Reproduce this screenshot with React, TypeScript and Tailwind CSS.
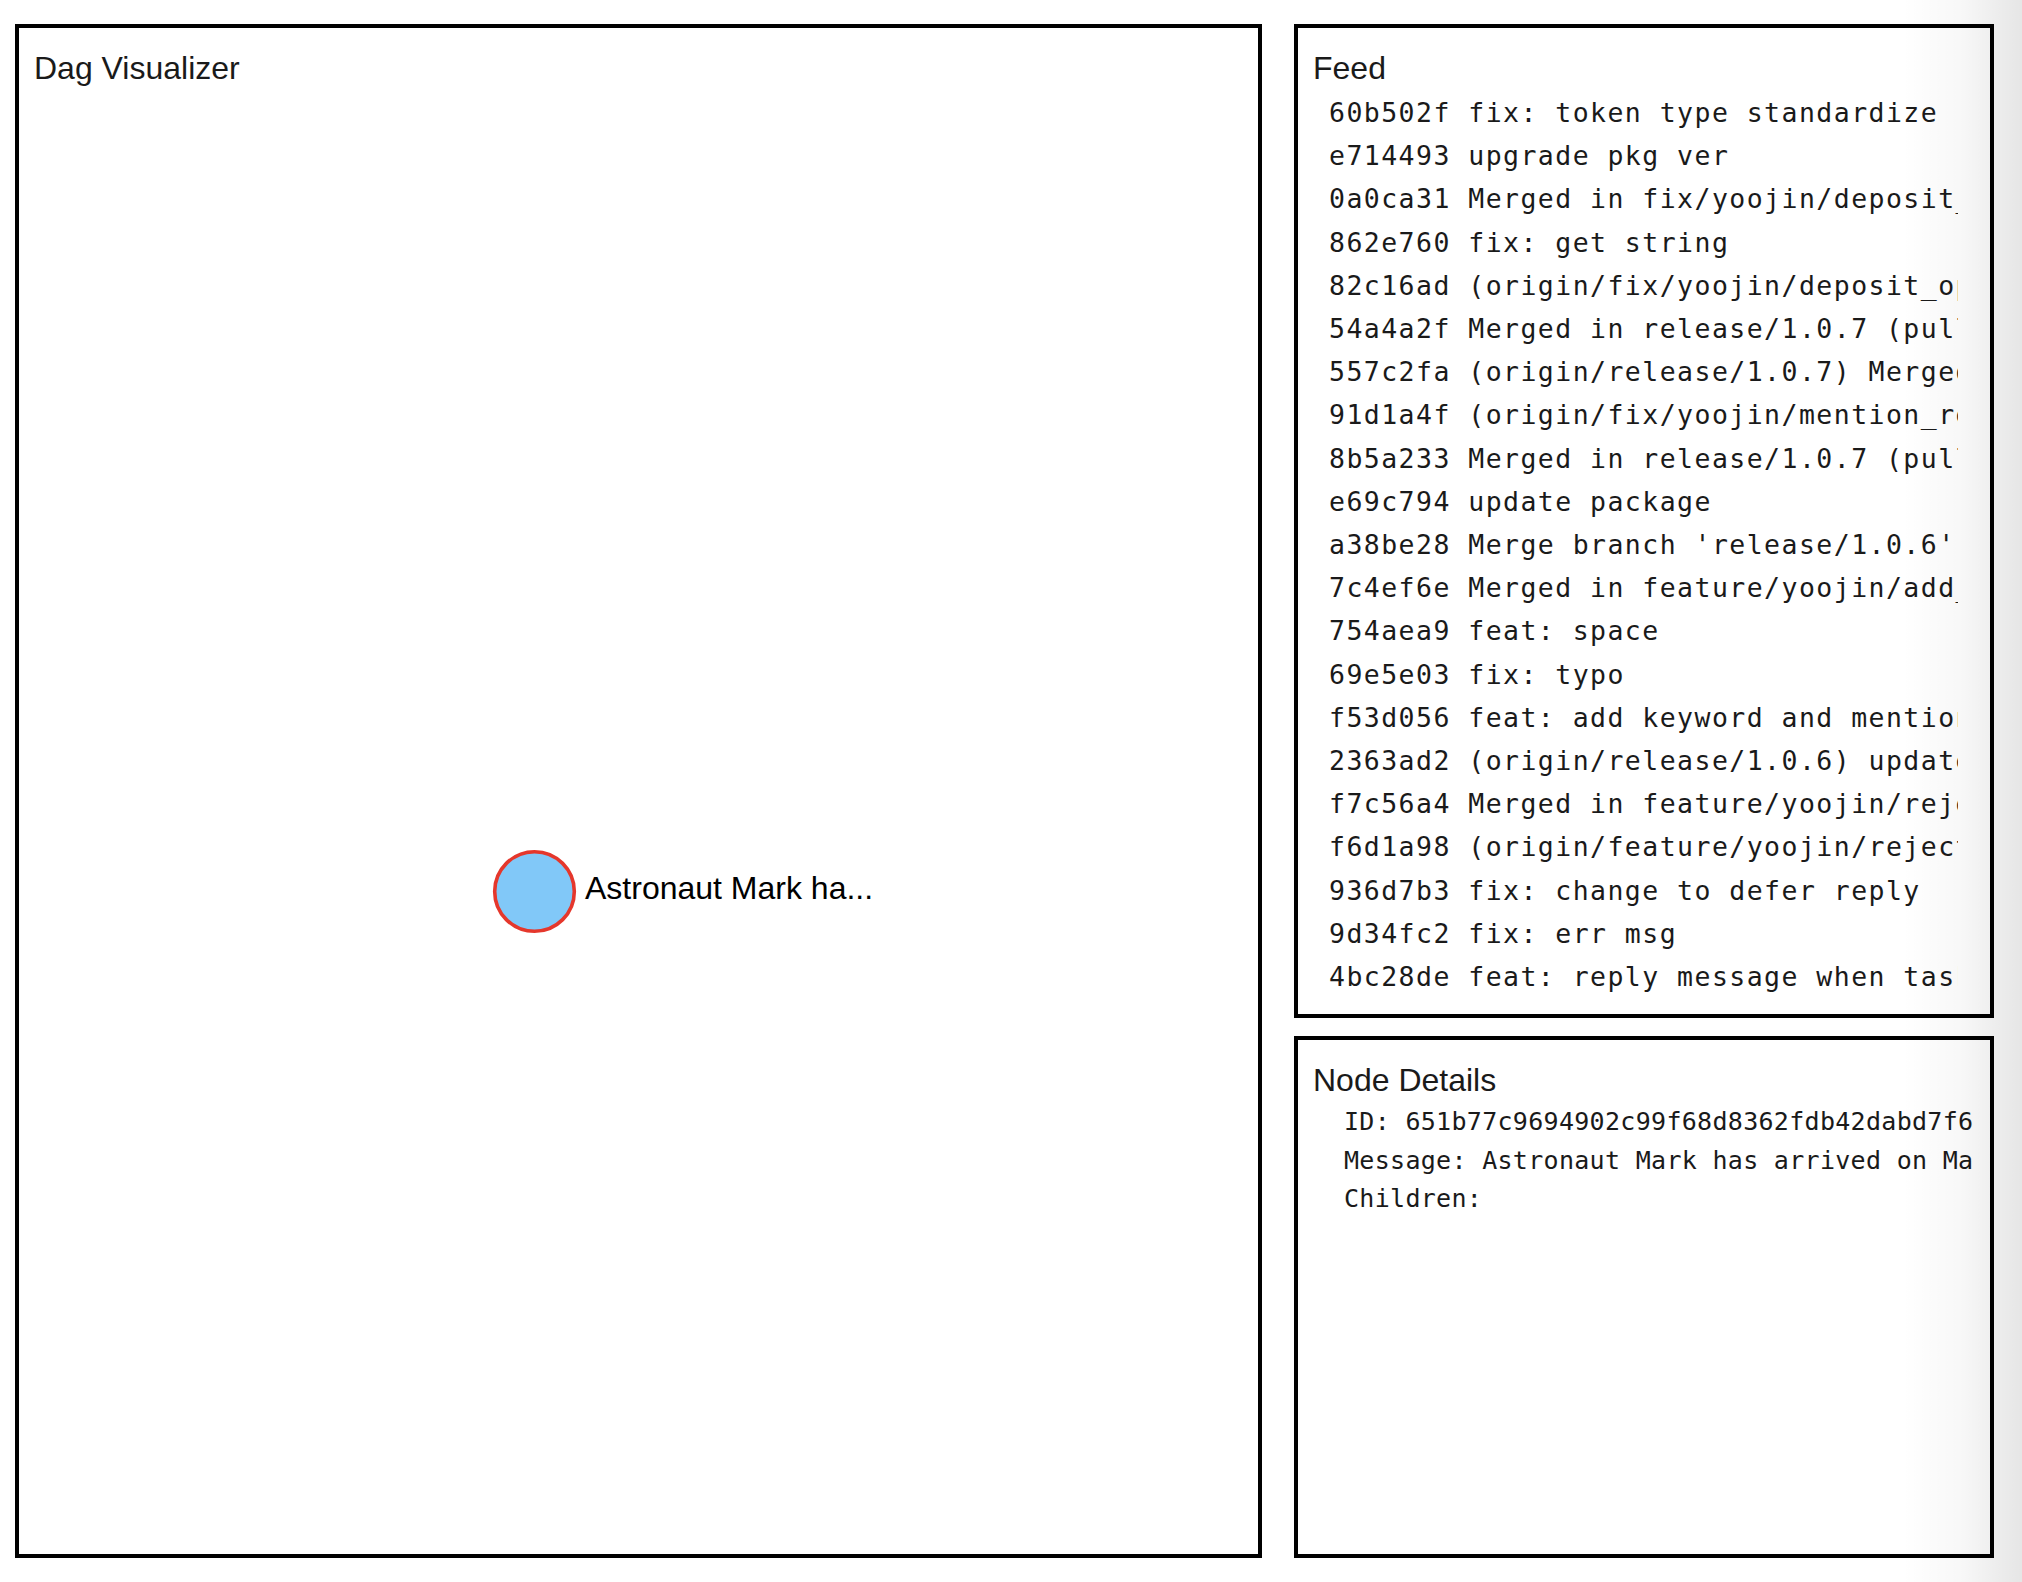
import React from "react";

const feed = [
  "60b502f fix: token type standardize",
  "e714493 upgrade pkg ver",
  "0a0ca31 Merged in fix/yoojin/deposit_option (pull request #14)",
  "862e760 fix: get string",
  "82c16ad (origin/fix/yoojin/deposit_option) fix: deposit option",
  "54a4a2f Merged in release/1.0.7 (pull request #13)",
  "557c2fa (origin/release/1.0.7) Merged in fix/yoojin/mention_reply",
  "91d1a4f (origin/fix/yoojin/mention_reply) fix: mention reply",
  "8b5a233 Merged in release/1.0.7 (pull request #12)",
  "e69c794 update package",
  "a38be28 Merge branch 'release/1.0.6' into develop",
  "7c4ef6e Merged in feature/yoojin/add_keyword (pull request #11)",
  "754aea9 feat: space",
  "69e5e03 fix: typo",
  "f53d056 feat: add keyword and mention reply",
  "2363ad2 (origin/release/1.0.6) update version",
  "f7c56a4 Merged in feature/yoojin/reject_task (pull request #10)",
  "f6d1a98 (origin/feature/yoojin/reject_task) feat: reject task",
  "936d7b3 fix: change to defer reply",
  "9d34fc2 fix: err msg",
  "4bc28de feat: reply message when task is done",
];

const sans = "font-['Liberation_Sans',Arial,sans-serif]";
const mono = "font-['DejaVu_Sans_Mono',monospace]";

function PanelTitle({ children }: { children: React.ReactNode }) {
  return <h2 className={`${sans} text-[32px] leading-[37px] text-[#1a1a1a]`}>{children}</h2>;
}

export default function App() {
  return (
    <div className="relative flex h-[1582px] gap-[32px] overflow-hidden bg-white pt-[24px] pb-[24px] pl-[15px] pr-[28px]">
      {/* Dag canvas */}
      <div className="relative flex w-[1247px] flex-col border-4 border-black px-[15px] pt-[22px]">
        <PanelTitle>Dag Visualizer</PanelTitle>
        <svg className="absolute inset-0 h-full w-full" xmlns="http://www.w3.org/2000/svg">
          <circle cx="515.5" cy="863.5" r="39.8" fill="#81c8f8" stroke="#e5372c" strokeWidth="3.6" />
          <text x="566" y="871" fontFamily="Liberation Sans, Arial, sans-serif" fontSize="32" fill="#000">
            Astronaut Mark ha...
          </text>
        </svg>
      </div>

      {/* Right column */}
      <div className="flex w-[700px] flex-col gap-[18px]">
        <div className="flex h-[994px] flex-col border-4 border-black px-[15px] pt-[22px]">
          <PanelTitle>Feed</PanelTitle>
          <div className={`${mono} mt-[4px] ml-[16px] mr-[17px] overflow-hidden whitespace-pre text-[26.5px] leading-[43.2px] tracking-[1.45px] text-[#1a1a1a]`}>
            {feed.map((line) => (
              <div key={line}>{line}</div>
            ))}
          </div>
        </div>

        <div className="flex flex-1 flex-col border-4 border-black px-[15px] pt-[22px]">
          <PanelTitle>Node Details</PanelTitle>
          <div className={`${mono} mt-[4px] ml-[31px] mr-[1px] overflow-hidden whitespace-pre text-[25px] leading-[38.5px] tracking-[0.3px] text-[#1a1a1a]`}>
            <div>ID: 651b77c9694902c99f68d8362fdb42dabd7f6a1c</div>
            <div>Message: Astronaut Mark has arrived on Mars</div>
            <div>Children:</div>
          </div>
        </div>
      </div>

      {/* right edge fade */}
      <div className="pointer-events-none absolute top-0 right-0 bottom-0 w-[120px] bg-linear-to-r from-transparent via-black/[0.03] to-black/10" />
    </div>
  );
}
